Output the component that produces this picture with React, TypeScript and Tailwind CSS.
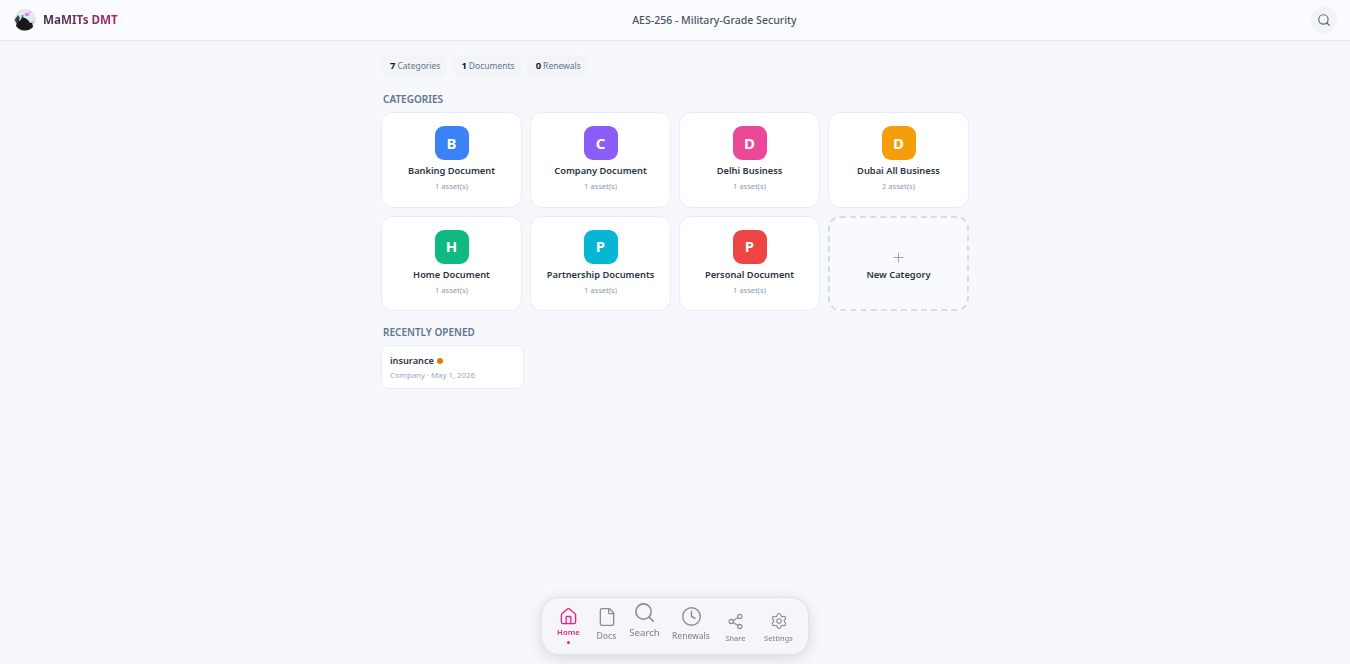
import React from 'react';
import { Home, File, Search, Clock, Share2, Settings, Plus } from 'lucide-react';

const categories = [
  { letter: 'B', name: 'Banking Document', count: 1, color: 'bg-[#3b82f6]' },
  { letter: 'C', name: 'Company Document', count: 1, color: 'bg-[#8b5cf6]' },
  { letter: 'D', name: 'Delhi Business', count: 1, color: 'bg-[#ec4899]' },
  { letter: 'D', name: 'Dubai All Business', count: 2, color: 'bg-[#f59e0b]' },
  { letter: 'H', name: 'Home Document', count: 1, color: 'bg-[#10b981]' },
  { letter: 'P', name: 'Partnership Documents', count: 1, color: 'bg-[#06b6d4]' },
  { letter: 'P', name: 'Personal Document', count: 1, color: 'bg-[#ef4444]' },
];

const stats = [
  { value: 7, label: 'Categories' },
  { value: 1, label: 'Documents' },
  { value: 0, label: 'Renewals' },
];

const Logo: React.FC = () => (
  <svg width="24" height="24" viewBox="0 0 24 24" className="shrink-0">
    <circle cx="12" cy="12" r="11" fill="#e5e7eb" />
    <path d="M3 18 L5 11 L7 13 L9 9 L12 10 L15 12 L17 15 L19 14 L20 19 A11 11 0 0 1 3 18Z" fill="#17171c" />
    <path d="M1.5 12 L5 7 L7 10 L4 16Z" fill="#3f3f46" />
    <rect x="8" y="7" width="3" height="2" fill="#22d3ee" />
    <rect x="12" y="5" width="4" height="3" fill="#e879f9" />
    <rect x="16" y="3" width="2" height="2" fill="#f0abfc" />
    <rect x="18" y="13" width="3" height="2" fill="#e9a8f0" />
  </svg>
);

const App: React.FC = () => {
  return (
    <div className="min-h-[664px] bg-[#f6f8fc] font-['Noto_Sans',sans-serif] text-[#1f2937]">
      <header className="h-[41px] flex items-center justify-between px-[13px] border-b border-[#e5e8ee] bg-[#fafbfe]">
        <div className="flex items-center gap-[6px]">
          <Logo />
          <span className="text-[11.7px] font-bold bg-gradient-to-r from-[#333152] to-[#c0185f] bg-clip-text text-transparent">MaMITs DMT</span>
        </div>
        <div className="pt-[1px] text-[10.55px] font-medium text-[#4b5563]">AES-256 - Military-Grade Security</div>
        <button className="w-[26px] h-[26px] rounded-full bg-[#f1f3f6] flex items-center justify-center">
          <Search size={14} className="text-[#5b6b84]" />
        </button>
      </header>

      <main className="w-[588px] mx-auto pt-[14px]">
        <div className="flex gap-[5px]">
          {stats.map((s) => (
            <div key={s.label} className="h-[23px] pl-[9px] pr-[7px] rounded-[10px] bg-[#f2f4f8] flex items-center gap-[2px] text-[8.5px] text-[#64748b]">
              <span className="text-[9.5px] font-bold text-[#111827]">{s.value}</span>
              <span>{s.label}</span>
            </div>
          ))}
        </div>

        <h2 className="mt-[14px] ml-[2px] mb-[6px] text-[10px] leading-[14px] font-semibold text-[#64748b]">CATEGORIES</h2>
        <div className="grid grid-cols-4 gap-[8px]">
          {categories.map((c) => (
            <div key={c.name} className="h-[95.5px] rounded-[12px] bg-white border border-[#e9edf3] flex flex-col items-center pt-[13px]">
              <div className={`w-[34px] h-[34px] rounded-[9px] ${c.color} flex items-center justify-center text-white text-[15px] font-bold`}>{c.letter}</div>
              <div className="mt-[3px] text-[9.3px] leading-[15px] font-semibold text-[#2b3444]">{c.name}</div>
              <div className="mt-[2px] text-[7.6px] leading-[12px] text-[#8a9ab3]">{c.count} asset(s)</div>
            </div>
          ))}
          <div className="h-[95.5px] rounded-[12px] bg-[#f9fafd] border-2 border-dashed border-[#d5dde8] flex flex-col items-center pt-[32px]">
            <Plus size={15} strokeWidth={1.25} className="text-[#7c8aa3]" />
            <div className="mt-[2px] text-[9.3px] leading-[15px] font-semibold text-[#2b3444]">New Category</div>
          </div>
        </div>

        <h2 className="mt-[14px] ml-[2px] mb-[6px] text-[10px] leading-[14px] font-semibold text-[#64748b]">RECENTLY OPENED</h2>
        <div className="w-[143px] h-[44px] rounded-[8px] bg-white border border-[#e9edf3] px-[8px] pt-[7px]">
          <div className="flex items-center gap-[3px] text-[9.2px] leading-[15px] font-semibold text-[#2b3444]">
            insurance
            <span className="w-[6px] h-[6px] rounded-full bg-[#e07b0a]" />
          </div>
          <div className="mt-[1px] text-[7.8px] leading-[13px] text-[#9aa8bd]">Company · May 1, 2026</div>
        </div>
      </main>

      <nav className="fixed left-[541px] top-[597px] w-[268px] h-[58px] rounded-[18px] bg-[#f5f6f9] border border-[#dfe2e8] shadow-[0_3px_14px_rgba(60,70,90,0.18)] flex items-start justify-center pr-[2px]">
        <div className="flex flex-col items-center w-[44px] pt-[9px] text-[#e6267e]">
          <Home size={19} strokeWidth={1.7} />
          <span className="mt-[1px] text-[7.8px] leading-[11px] font-semibold">Home</span>
          <span className="mt-[3px] w-[3px] h-[3px] rounded-full bg-[#e6267e]" />
        </div>
        <div className="flex flex-col items-center w-[32px] pt-[9px] text-[#8a8d94]">
          <File size={20} strokeWidth={1.6} />
          <span className="mt-[3px] text-[8.6px] leading-[12px] font-medium">Docs</span>
        </div>
        <div className="flex flex-col items-center w-[44px] pt-[3px] text-[#8a8d94]">
          <Search size={23} strokeWidth={1.6} />
          <span className="mt-[2px] text-[9.5px] leading-[13px] font-medium">Search</span>
        </div>
        <div className="flex flex-col items-center w-[49px] pt-[8px] text-[#8a8d94]">
          <Clock size={21} strokeWidth={1.6} />
          <span className="mt-[3px] text-[8.4px] leading-[12px] font-medium">Renewals</span>
        </div>
        <div className="flex flex-col items-center w-[40px] pt-[15px] text-[#8a8d94]">
          <Share2 size={17} strokeWidth={1.6} />
          <span className="mt-[3px] text-[7.4px] leading-[11px] font-medium">Share</span>
        </div>
        <div className="flex flex-col items-center w-[46px] pt-[14px] text-[#8a8d94]">
          <Settings size={18} strokeWidth={1.5} />
          <span className="mt-[3px] text-[7.4px] leading-[11px] font-medium">Settings</span>
        </div>
      </nav>
    </div>
  );
};

export default App;
